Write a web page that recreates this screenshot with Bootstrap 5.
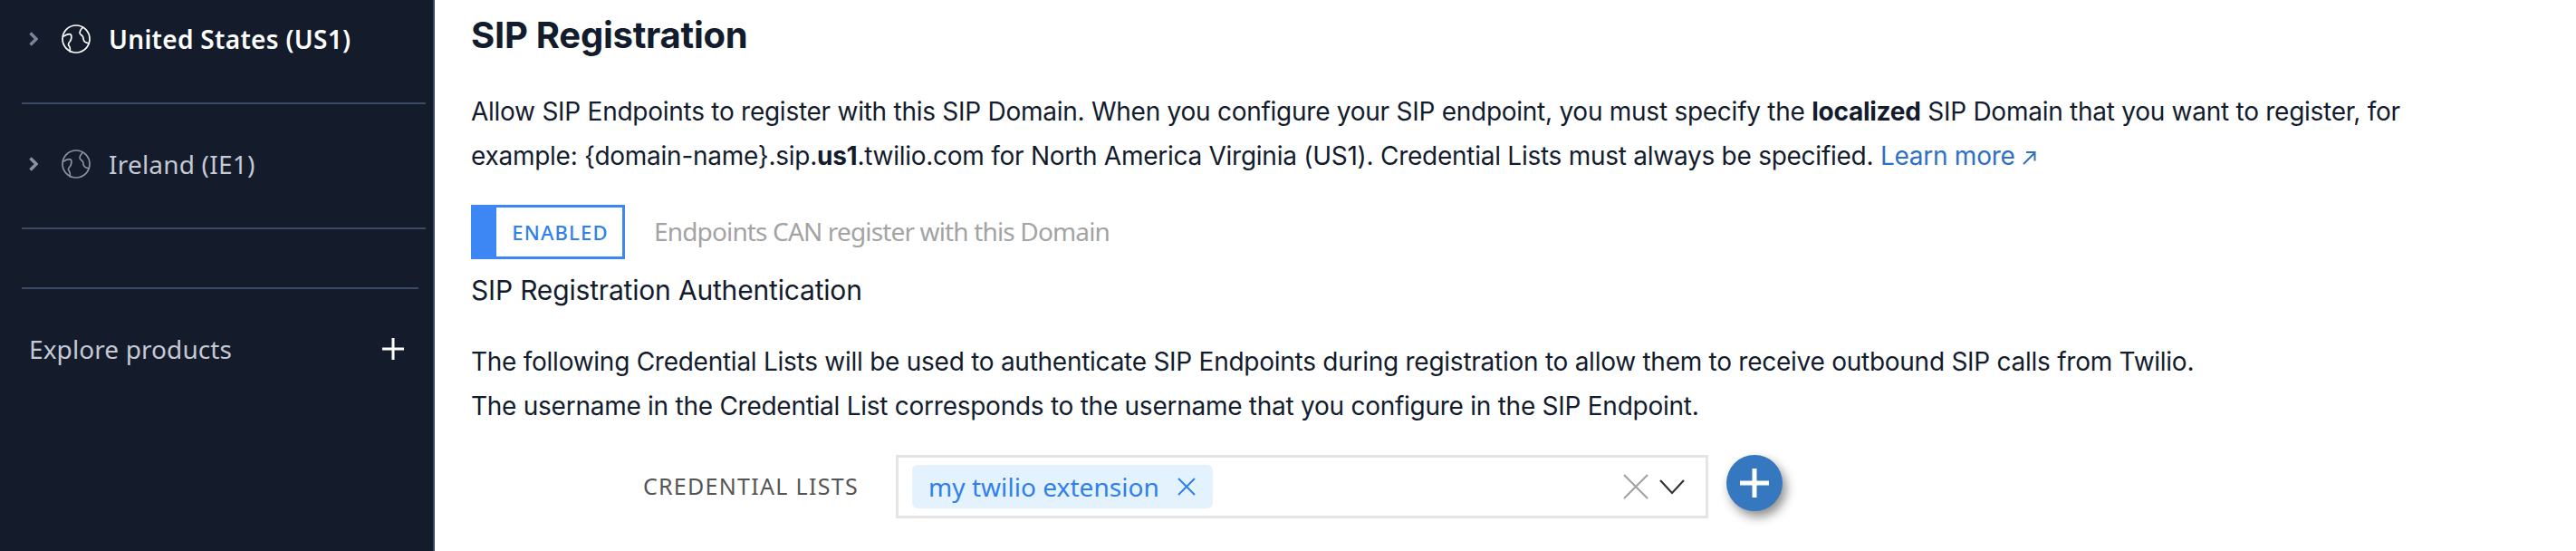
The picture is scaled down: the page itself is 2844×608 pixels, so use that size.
<!DOCTYPE html>
<html lang="en">
<head>
  <meta charset="UTF-8" />
  <title>SIP Registration | Twilio</title>
  <link href="https://cdn.jsdelivr.net/npm/bootstrap@5.3.0/dist/css/bootstrap.min.css" rel="stylesheet" />
  <style>
    html, body { height: 608px; overflow: hidden; background: #fff; }
    body { font-family: Inter, "Liberation Sans", sans-serif; color: #121c2d; }
    .side { width: 480px; height: 608px; background: #141c2c; border-right: 2px solid #3d4a66; flex: none; font-family: "Noto Sans", "Open Sans", sans-serif; }
    .region { height: 86px; margin-left: 32px; gap: 26px; font-size: 28px; letter-spacing: .2px; color: #c5c9d3; }
    .region.on { color: #fff; font-weight: 600; letter-spacing: .3px; }
    .region .glb { margin-right: -6px; }
    .side-rule { height: 2px; background: #3d4a66; margin-left: 24px; }
    .rule-a { width: 446px; }
    .rule-b { width: 438px; }
    .gap-one { height: 27px; }
    .gap-mid { height: 23px; }
    .gap-two { height: 64px; }
    .explore { margin: 38px 0 0 32px; width: 414px; font-size: 28px; letter-spacing: .1px; color: #c5c9d3; line-height: 56px; }
    .main-pane { padding-left: 40px; width: 2364px; }
    .sec-title { font-size: 40px; font-weight: 700; letter-spacing: -.25px; line-height: 48px; margin: 15px 0 36px; color: #121c2d; }
    .body-copy { font-size: 28px; line-height: 49px; letter-spacing: -.26px; margin: 0; white-space: nowrap; }
    .body-copy b { font-weight: 700; }
    .more { color: #2f6fc4; text-decoration: none; }
    .toggle-row { margin-top: 29px; gap: 32px; font-family: "Noto Sans", "Open Sans", sans-serif; }
    .toggle-box { width: 170px; height: 60px; border: 3px solid #3d87f5; border-left-width: 28px; color: #2f7fec; font-size: 22px; font-weight: 500; letter-spacing: 1.2px; padding-left: 2px; }
    .toggle-note { font-size: 28px; color: #a3a3a3; letter-spacing: -.85px; margin-top: -2px; }
    .sub-title { font-size: 30px; line-height: 40px; letter-spacing: -.18px; margin: 14px 0 35px; font-weight: 400; }
    .cred-row { margin-top: 29px; }
    .cred-label { width: 469px; padding-right: 41px; text-align: right; font-family: "Noto Sans", "Open Sans", sans-serif; font-size: 25px; letter-spacing: 1.3px; color: #555; }
    .cred-box { width: 897px; height: 70px; border: 3px solid #e4e4e4; padding: 0 23px 0 15px; }
    .chip { height: 48px; width: 332px; padding-left: 18px; gap: 20px; background: #e3f2fd; border-radius: 6px; color: #2f7fec; font-family: "Noto Sans", "Open Sans", sans-serif; font-size: 28px; letter-spacing: .05px; }
    .add-btn { width: 62px; height: 62px; margin-left: 20px; margin-top: -8px; padding: 0; border: 0; border-radius: 50%; background: #3578bf; box-shadow: 4px 6px 12px rgba(0,0,0,.45); }
  </style>
</head>
<body>
  <div class="d-flex">
    <aside class="side">
      <div class="region on d-flex align-items-center">
        <svg width="10" height="16" viewBox="0 0 10 16" fill="none" stroke="#7d8499" stroke-width="3.4"><path d="M1.5 1.5 8 8 1.5 14.5"/></svg>
        <svg class="glb" width="32" height="32" viewBox="0 0 32 32" fill="none" stroke="#fff" stroke-width="1.7"><circle cx="16" cy="16" r="15"/><path d="M1.2 13.5C4 12 8 9.5 10 11c1.7 1.5.8 6-1 8-2 2-1.7 4-.3 5.5.8 1 .8 3 .3 6"/><path d="M24 3c-2.5 1.5-5 5.5-3.5 7.5 1.5 1.5 3.5 2 3.5 5 0 3.5 2.5 5 7 5.5"/></svg>
        <span>United States (US1)</span>
      </div>
      <div class="gap-one"></div>
      <div class="side-rule rule-a"></div>
      <div class="gap-mid"></div>
      <div class="region d-flex align-items-center">
        <svg width="10" height="16" viewBox="0 0 10 16" fill="none" stroke="#8b91a3" stroke-width="3.4"><path d="M1.5 1.5 8 8 1.5 14.5"/></svg>
        <svg class="glb" width="32" height="32" viewBox="0 0 32 32" fill="none" stroke="#8b91a3" stroke-width="1.7"><circle cx="16" cy="16" r="15"/><path d="M1.2 13.5C4 12 8 9.5 10 11c1.7 1.5.8 6-1 8-2 2-1.7 4-.3 5.5.8 1 .8 3 .3 6"/><path d="M24 3c-2.5 1.5-5 5.5-3.5 7.5 1.5 1.5 3.5 2 3.5 5 0 3.5 2.5 5 7 5.5"/></svg>
        <span>Ireland (IE1)</span>
      </div>
      <div class="gap-one"></div>
      <div class="side-rule rule-a"></div>
      <div class="gap-two"></div>
      <div class="side-rule rule-b"></div>
      <div class="explore d-flex justify-content-between align-items-center">
        <span>Explore products</span>
        <svg width="24" height="24" viewBox="0 0 24 24" stroke="#fff" stroke-width="3"><path d="M12 0v24M0 12h24"/></svg>
      </div>
    </aside>
    <main class="main-pane">
      <h2 class="sec-title">SIP Registration</h2>
      <p class="body-copy">Allow SIP Endpoints to register with this SIP Domain. When you configure your SIP endpoint, you must specify the <b>localized</b> SIP Domain that you want to register, for<br>example: {domain-name}.sip.<b>us1</b>.twilio.com for North America Virginia (US1). Credential Lists must always be specified. <a class="more" href="#">Learn more <svg width="16" height="16" viewBox="0 0 16 16" fill="none" stroke="#2f6fc4" stroke-width="2"><path d="M2 15 14 3M5 2h9.5v9.5"/></svg></a></p>
      <div class="toggle-row d-flex align-items-center">
        <div class="toggle-box d-flex align-items-center justify-content-center">ENABLED</div>
        <div class="toggle-note">Endpoints CAN register with this Domain</div>
      </div>
      <div class="sub-title">SIP Registration Authentication</div>
      <p class="body-copy">The following Credential Lists will be used to authenticate SIP Endpoints during registration to allow them to receive outbound SIP calls from Twilio.<br>The username in the Credential List corresponds to the username that you configure in the SIP Endpoint.</p>
      <div class="cred-row d-flex align-items-center">
        <div class="cred-label">CREDENTIAL LISTS</div>
        <div class="cred-box d-flex align-items-center justify-content-between">
          <span class="chip d-inline-flex align-items-center">my twilio extension
            <svg width="20" height="20" viewBox="0 0 20 20" stroke="#2f7fec" stroke-width="2"><path d="M1 1l18 18M19 1 1 19"/></svg>
          </span>
          <span class="d-flex align-items-center gap-2">
            <svg width="28" height="28" viewBox="0 0 28 28" stroke="#a3a3a3" stroke-width="2.2"><path d="M1 1l26 26M27 1 1 27"/></svg>
            <svg class="ms-1" width="28" height="17" viewBox="0 0 28 17" fill="none" stroke="#333" stroke-width="2.2"><path d="M1 1l13 14L27 1"/></svg>
          </span>
        </div>
        <button class="add-btn btn d-flex align-items-center justify-content-center" type="button">
          <svg width="32" height="32" viewBox="0 0 32 32" stroke="#fff" stroke-width="5"><path d="M16 0v32M0 16h32"/></svg>
        </button>
      </div>
    </main>
  </div>
</body>
</html>
